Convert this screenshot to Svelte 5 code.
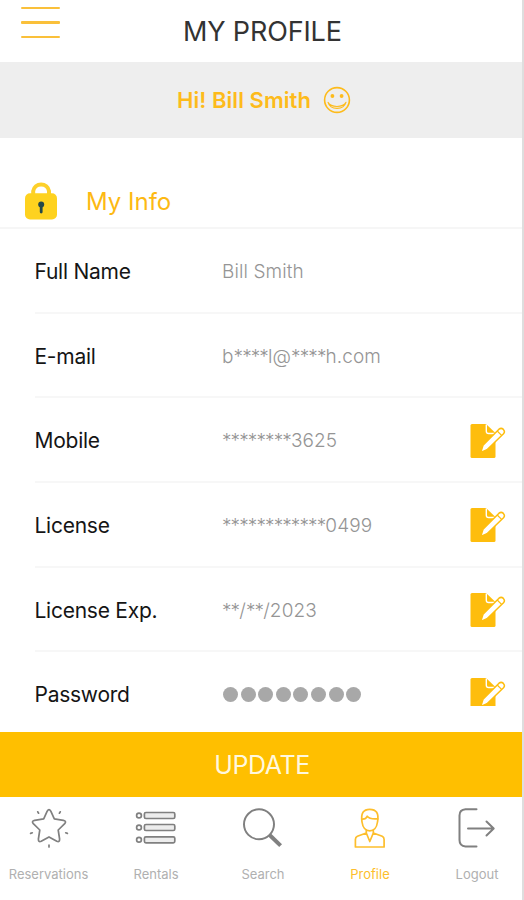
<script lang="ts">
  interface Field {
    id: string
    label: string
    value: string
    editable?: boolean
    masked?: boolean
  }

  const fields: Field[] = [
    { id: 'name', label: 'Full Name', value: 'Bill Smith' },
    { id: 'email', label: 'E-mail', value: 'b****l@****h.com' },
    { id: 'mobile', label: 'Mobile', value: '********3625', editable: true },
    { id: 'license', label: 'License', value: '************0499', editable: true },
    { id: 'expiry', label: 'License Exp.', value: '**/**/2023', editable: true },
    { id: 'password', label: 'Password', value: '', editable: true, masked: true },
  ]

  const tabs = ['Reservations', 'Rentals', 'Search', 'Profile', 'Logout']

  let activeTab = $state('Profile')

  // Runs of asterisks are set tighter than the text around them.
  function parts(value: string): string[] {
    return value.split(/(\*+)/).filter(Boolean)
  }
</script>

<div class="screen">
  <header class="topbar">
    <button type="button" class="menu" aria-label="Menu">
      <span></span>
      <span></span>
      <span></span>
    </button>
    <h1>MY PROFILE</h1>
  </header>

  <div class="greeting">
    <span class="hello">Hi! Bill Smith</span>
    <svg width="28" height="28" viewBox="0 0 28 28" fill="none" stroke="#fdbb1b" aria-hidden="true">
      <circle cx="14" cy="14" r="12.4" stroke-width="1.6" />
      <circle cx="9.4" cy="10" r="1.9" fill="#fdbb1b" stroke="none" />
      <circle cx="18.6" cy="10" r="1.9" fill="#fdbb1b" stroke="none" />
      <path d="M5 16.4C7.4 24.4 20.6 24.4 23 16.4C19.8 21.8 8.2 21.8 5 16.4Z" stroke-width="1.1" stroke-linejoin="round" />
    </svg>
  </div>

  <div class="section">
    <svg width="32" height="39" viewBox="0 0 32 39" aria-hidden="true">
      <path d="M8.2 15V10A8 7.8 0 0 1 24 10V15" fill="none" stroke="#fdd02a" stroke-width="4" />
      <rect y="12.2" width="32" height="26.3" rx="5" fill="#fed21f" />
      <circle cx="16.2" cy="23.5" r="3" fill="#24484a" />
      <path d="M16.2 24V31" stroke="#24484a" stroke-width="2.8" stroke-linecap="round" />
    </svg>
    <h2>My Info</h2>
  </div>

  <div class="fields">
    {#each fields as field (field.id)}
      <div class="row">
        <span class="label">{field.label}</span>
        {#if field.masked}
          <span class="dots" aria-label="Hidden password">
            {#each Array(8) as _}
              <i></i>
            {/each}
          </span>
        {:else}
          <span class="value">{#each parts(field.value) as part}<span class:stars={part[0] === '*'}>{part}</span>{/each}</span>
        {/if}
        {#if field.editable}
          <button type="button" class="edit" class:short={field.masked} aria-label="Edit {field.label}">
            <svg width="36" height="36" viewBox="0 0 36 36" aria-hidden="true">
              <path d="M2 1H16L25.5 10V33.5Q25.5 35 24 35H2Q.5 35 .5 33.5V2.5Q.5 1 2 1Z" fill="#febd0d" />
              <path d="M16.3 1.5V8.2Q16.3 10.5 18.6 10.5H25" fill="none" stroke="#fff" stroke-width="1.4" />
              <path d="M13 22.2L29 6.2Q31.2 4.4 33.4 6.4Q35.4 8.6 33.5 10.8L17 26.8L10.8 29.4Z" fill="#fff" stroke="#febd0d" stroke-width="1.5" stroke-linejoin="round" />
              <path d="M27.2 8L31.6 12.4" stroke="#febd0d" stroke-width="1.2" />
            </svg>
          </button>
        {/if}
      </div>
    {/each}
  </div>

  <button type="button" class="update"><span>UPDATE</span></button>

  <nav class="tabs">
    {#each tabs as tab (tab)}
      <button type="button" class="tab" class:active={tab === activeTab} onclick={() => (activeTab = tab)}>
        <svg width="42" height="42" viewBox="0 0 42 42" fill="none" stroke="currentColor" stroke-width="1.7" stroke-linecap="round" stroke-linejoin="round" aria-hidden="true">
          {#if tab === 'Reservations'}
            <path d="M19.2 3.2Q21 .2 22.8 3.2L26.3 10.9L35.4 12.3Q38.8 13.1 36.7 15.7L30.2 22L31.6 31Q31.7 34.6 28.8 33.2L21 28.9L13.2 33.2Q10.3 34.6 10.4 31L11.8 22L5.3 15.7Q3.2 13.1 6.6 12.3L15.7 10.9Z" />
            <path d="M9.7 3.8L10.6 5.2M32.3 3.8L31.4 5.2M2.6 25.4L4.3 24.8M39.4 25.4L37.7 24.8M21 37V39" />
          {:else if tab === 'Rentals'}
            {#each [7.5, 19.5, 31.8] as y}
              <circle cx="4" cy={y} r="2.4" />
              <rect x="9.4" y={y - 3} width="30.4" height="6" rx="1.5" fill="#ededed" />
            {/each}
          {:else if tab === 'Search'}
            <circle cx="17" cy="16.3" r="15" stroke-width="2" />
            <path d="M27.6 27L38.6 37.6" stroke-width="4" stroke-linecap="butt" />
          {:else if tab === 'Profile'}
            <path d="M13 14C11.6 5 14.5 1.3 20.7 1.3C27.2 1.3 30.2 5 28.5 14C27.8 19.8 24.5 22.8 20.8 22.8C17 22.8 13.8 19.8 13 14Z" />
            <path d="M13 11.2C15.6 11.4 17.4 10.3 18.2 8.2C20 10.6 24 11.2 28.6 10.8" />
            <path d="M17.3 22V25L8.4 28.3Q6.4 29.2 6.4 31.6V39H35.1V31.6Q35.1 29.2 33.2 28.3L24.3 25V22M17.3 25L20.8 33.5L24.3 25" />
          {:else}
            <path d="M20.5 1.3H9.5Q3.5 1.8 3.5 7.4V32Q3.5 38 9.5 38.5H20.5" stroke-width="2" />
            <path d="M12 20.5H37.5M30.5 13.5L37.7 20.5L30.5 27.5" stroke-width="2" />
          {/if}
        </svg>
        <span>{tab}</span>
      </button>
    {/each}
  </nav>
</div>

<style>
  :global(body) {
    margin: 0;
    background: #fff;
  }

  .screen {
    display: flex;
    flex-direction: column;
    box-sizing: border-box;
    width: 524px;
    height: 900px;
    overflow: hidden;
    border-right: 2px solid #dedede;
    background: #fff;
    font-family: Inter, 'Liberation Sans', sans-serif;
  }

  button {
    padding: 0;
    border: 0;
    background: none;
    font: inherit;
    color: inherit;
    cursor: pointer;
  }
  h1,
  h2 {
    margin: 0;
    font-weight: 400;
  }
  svg {
    display: block;
    flex-shrink: 0;
  }

  /* Header */
  .topbar {
    display: grid;
    grid-template-columns: 183px 1fr;
    height: 62px;
    flex-shrink: 0;
  }
  .menu {
    display: flex;
    flex-direction: column;
    gap: 12px;
    width: 39px;
    height: 33px;
    margin: 7px 0 0 21px;
  }
  .menu span {
    height: 2.4px;
    border-radius: 1px;
    background: #fac03a;
  }
  h1 {
    font-size: 27px;
    line-height: 63px;
    letter-spacing: -0.15px;
    color: #333;
  }

  .greeting {
    display: flex;
    align-items: center;
    gap: 12px;
    height: 76px;
    padding-left: 177px;
    flex-shrink: 0;
    background: #eee;
  }
  .hello {
    font-size: 22px;
    font-weight: 600;
    letter-spacing: 0.05px;
    color: #fdbb1b;
  }

  .section {
    display: flex;
    align-items: flex-end;
    gap: 29px;
    box-sizing: border-box;
    height: 91px;
    padding: 0 0 7px 25px;
    flex-shrink: 0;
    border-bottom: 2px solid #f6f6f6;
  }
  h2 {
    font-size: 24px;
    line-height: 36px;
    color: #fdb913;
  }

  /* Profile rows */
  .fields {
    height: 503px;
    padding-left: 34.5px;
    flex-shrink: 0;
    overflow: hidden;
  }
  .row {
    display: grid;
    grid-template-columns: 187.5px 248px 36px;
    align-items: center;
    box-sizing: border-box;
    height: 84.7px;
    padding-top: 2px;
    border-bottom: 2px solid #f7f7f7;
  }
  .label {
    font-size: 21px;
    letter-spacing: -0.25px;
    color: #151515;
  }
  .value {
    font-size: 19px;
    font-weight: 300;
    letter-spacing: 0.1px;
    color: #959595;
  }
  .stars {
    letter-spacing: -0.9px;
  }
  .dots {
    display: flex;
    gap: 2.6px;
    padding-left: 1px;
  }
  .dots i {
    width: 15px;
    height: 15px;
    border-radius: 50%;
    background: #a8a8a8;
  }
  .edit.short {
    height: 29px;
    margin-top: -6px;
    overflow: hidden;
  }
  .edit.short svg {
    margin-bottom: -7px;
  }

  .update {
    height: 65px;
    padding-left: 2px;
    flex-shrink: 0;
    background: #ffbf00;
    color: #fff8df;
    font-size: 25px;
    letter-spacing: -0.4px;
  }

  /* Bottom navigation */
  .tabs {
    display: grid;
    grid-template-columns: 97px 118px 96px 118px 96px;
    height: 103px;
    flex-shrink: 0;
  }
  .tab {
    display: flex;
    flex-direction: column;
    align-items: center;
    gap: 16px;
    padding-top: 11px;
    color: #808080;
    font-size: 13px;
    line-height: 16px;
  }
  .tab span {
    color: #b0b0b0;
  }
  .tab.active,
  .tab.active span {
    color: #fdbe2c;
  }
</style>
